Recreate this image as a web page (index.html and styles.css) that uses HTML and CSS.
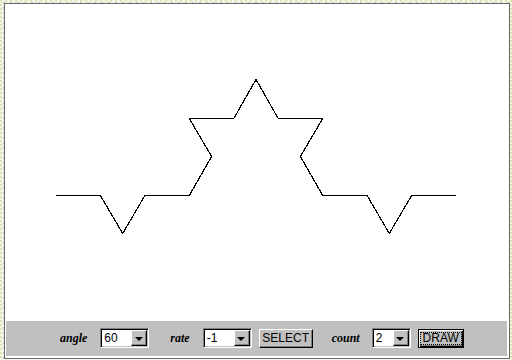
FILE: index.html
```html
<!DOCTYPE html>
<html lang="en">
<head>
    <meta charset="UTF-8">
    <title>Koch Curve Applet</title>
    <link rel="stylesheet" href="styles.css">
</head>
<body>
    <div class="applet">
        <div class="canvas">
            <svg width="503" height="317" viewBox="5 4 503 317" shape-rendering="crispEdges">
                <polyline fill="none" stroke="#000" stroke-width="1.2"
                    points="56,195.5 100.4,195.5 122.7,233.5 144.9,195.5 189.3,195.5 211.6,156.5 189.3,118.5 233.8,118.5 256,79.5 278.2,118.5 322.7,118.5 300.4,156.5 322.7,195.5 367.1,195.5 389.3,233.5 411.6,195.5 456,195.5"/>
            </svg>
        </div>
        <div class="controls">
            <span class="label label-angle">angle</span>
            <div class="combo">
                <span class="combo-value">60</span>
                <span class="combo-btn"><i class="arrow"></i></span>
            </div>
            <span class="label label-rate">rate</span>
            <div class="combo">
                <span class="combo-value">-1</span>
                <span class="combo-btn"><i class="arrow"></i></span>
            </div>
            <button class="btn btn-select">SELECT</button>
            <span class="label label-count">count</span>
            <div class="combo combo-small">
                <span class="combo-value">2</span>
                <span class="combo-btn"><i class="arrow"></i></span>
            </div>
            <button class="btn btn-draw"><span class="focus">DRAW</span></button>
        </div>
    </div>
</body>
</html>
```

FILE: styles.css
```css
html, body {
    margin: 0;
    padding: 0;
}
body {
    width: 512px;
    height: 360px;
    overflow: hidden;
    background-color: #f3f5ea;
    background-image:
        radial-gradient(circle at 1px 1px, #d8e8b0 0.8px, transparent 1px),
        radial-gradient(circle at 4px 3px, #c8c8c0 0.8px, transparent 1px);
    background-size: 5px 4px, 7px 5px;
}
.applet {
    margin: 3px 0 0 4px;
    width: 504px;
    height: 354px;
    border: 1px solid #6a6a6a;
    background-color: #fff;
    display: flex;
    flex-direction: column;
}
.canvas {
    height: 317px;
}
.canvas svg {
    display: block;
}
.controls {
    margin: 0 2px 0 1px;
    height: 34px;
    background-color: #c0c0c0;
    display: flex;
    align-items: center;
    padding-left: 54px;
    padding-bottom: 1px;
}
.label {
    font-family: "Liberation Serif", serif;
    font-style: italic;
    font-weight: bold;
    font-size: 12px;
    color: #000;
}
.label-angle {
    margin-right: 13px;
}
.label-rate {
    margin-left: 21px;
    margin-right: 13px;
}
.label-count {
    margin-left: 19px;
    margin-right: 12px;
}
.combo {
    box-sizing: border-box;
    width: 49px;
    height: 20px;
    background-color: #fff;
    border: 1px solid;
    border-color: #808080 #fff #fff #808080;
    box-shadow: inset 1px 1px #000, inset -1px -1px #c0c0c0;
    display: flex;
    align-items: center;
    padding: 1px 1px 1px 2px;
}
.combo-small {
    width: 39px;
}
.combo-value {
    flex: 1;
    font-family: "Liberation Sans", Arial, sans-serif;
    font-size: 12px;
    line-height: 14px;
    padding-left: 1px;
}
.combo-btn {
    box-sizing: border-box;
    width: 16px;
    height: 16px;
    background-color: #c0c0c0;
    border: 1px solid;
    border-color: #fff #000 #000 #fff;
    box-shadow: inset -1px -1px #808080;
    display: flex;
    align-items: center;
    justify-content: center;
}
.arrow {
    width: 0;
    height: 0;
    border-left: 4px solid transparent;
    border-right: 4px solid transparent;
    border-top: 4px solid #000;
    margin: 1px 1px 0 0;
}
.btn {
    box-sizing: border-box;
    height: 19px;
    padding: 0;
    background-color: #c0c0c0;
    border: 1px solid;
    border-color: #fff #000 #000 #fff;
    box-shadow: inset -1px -1px #808080;
    font-family: "Liberation Sans", Arial, sans-serif;
    font-size: 12px;
    color: #000;
}
.btn-select {
    width: 54px;
    margin-left: 7px;
}
.btn-draw {
    width: 46px;
    margin-left: 7px;
    border: 1px solid #000;
    box-shadow: inset 1px 1px #fff, inset -1px -1px #000, inset -2px -2px #808080;
    display: flex;
    align-items: center;
    justify-content: center;
}
.focus {
    display: block;
    border: 1px dotted #000;
    padding: 0 2px;
    line-height: 11px;
}
```
